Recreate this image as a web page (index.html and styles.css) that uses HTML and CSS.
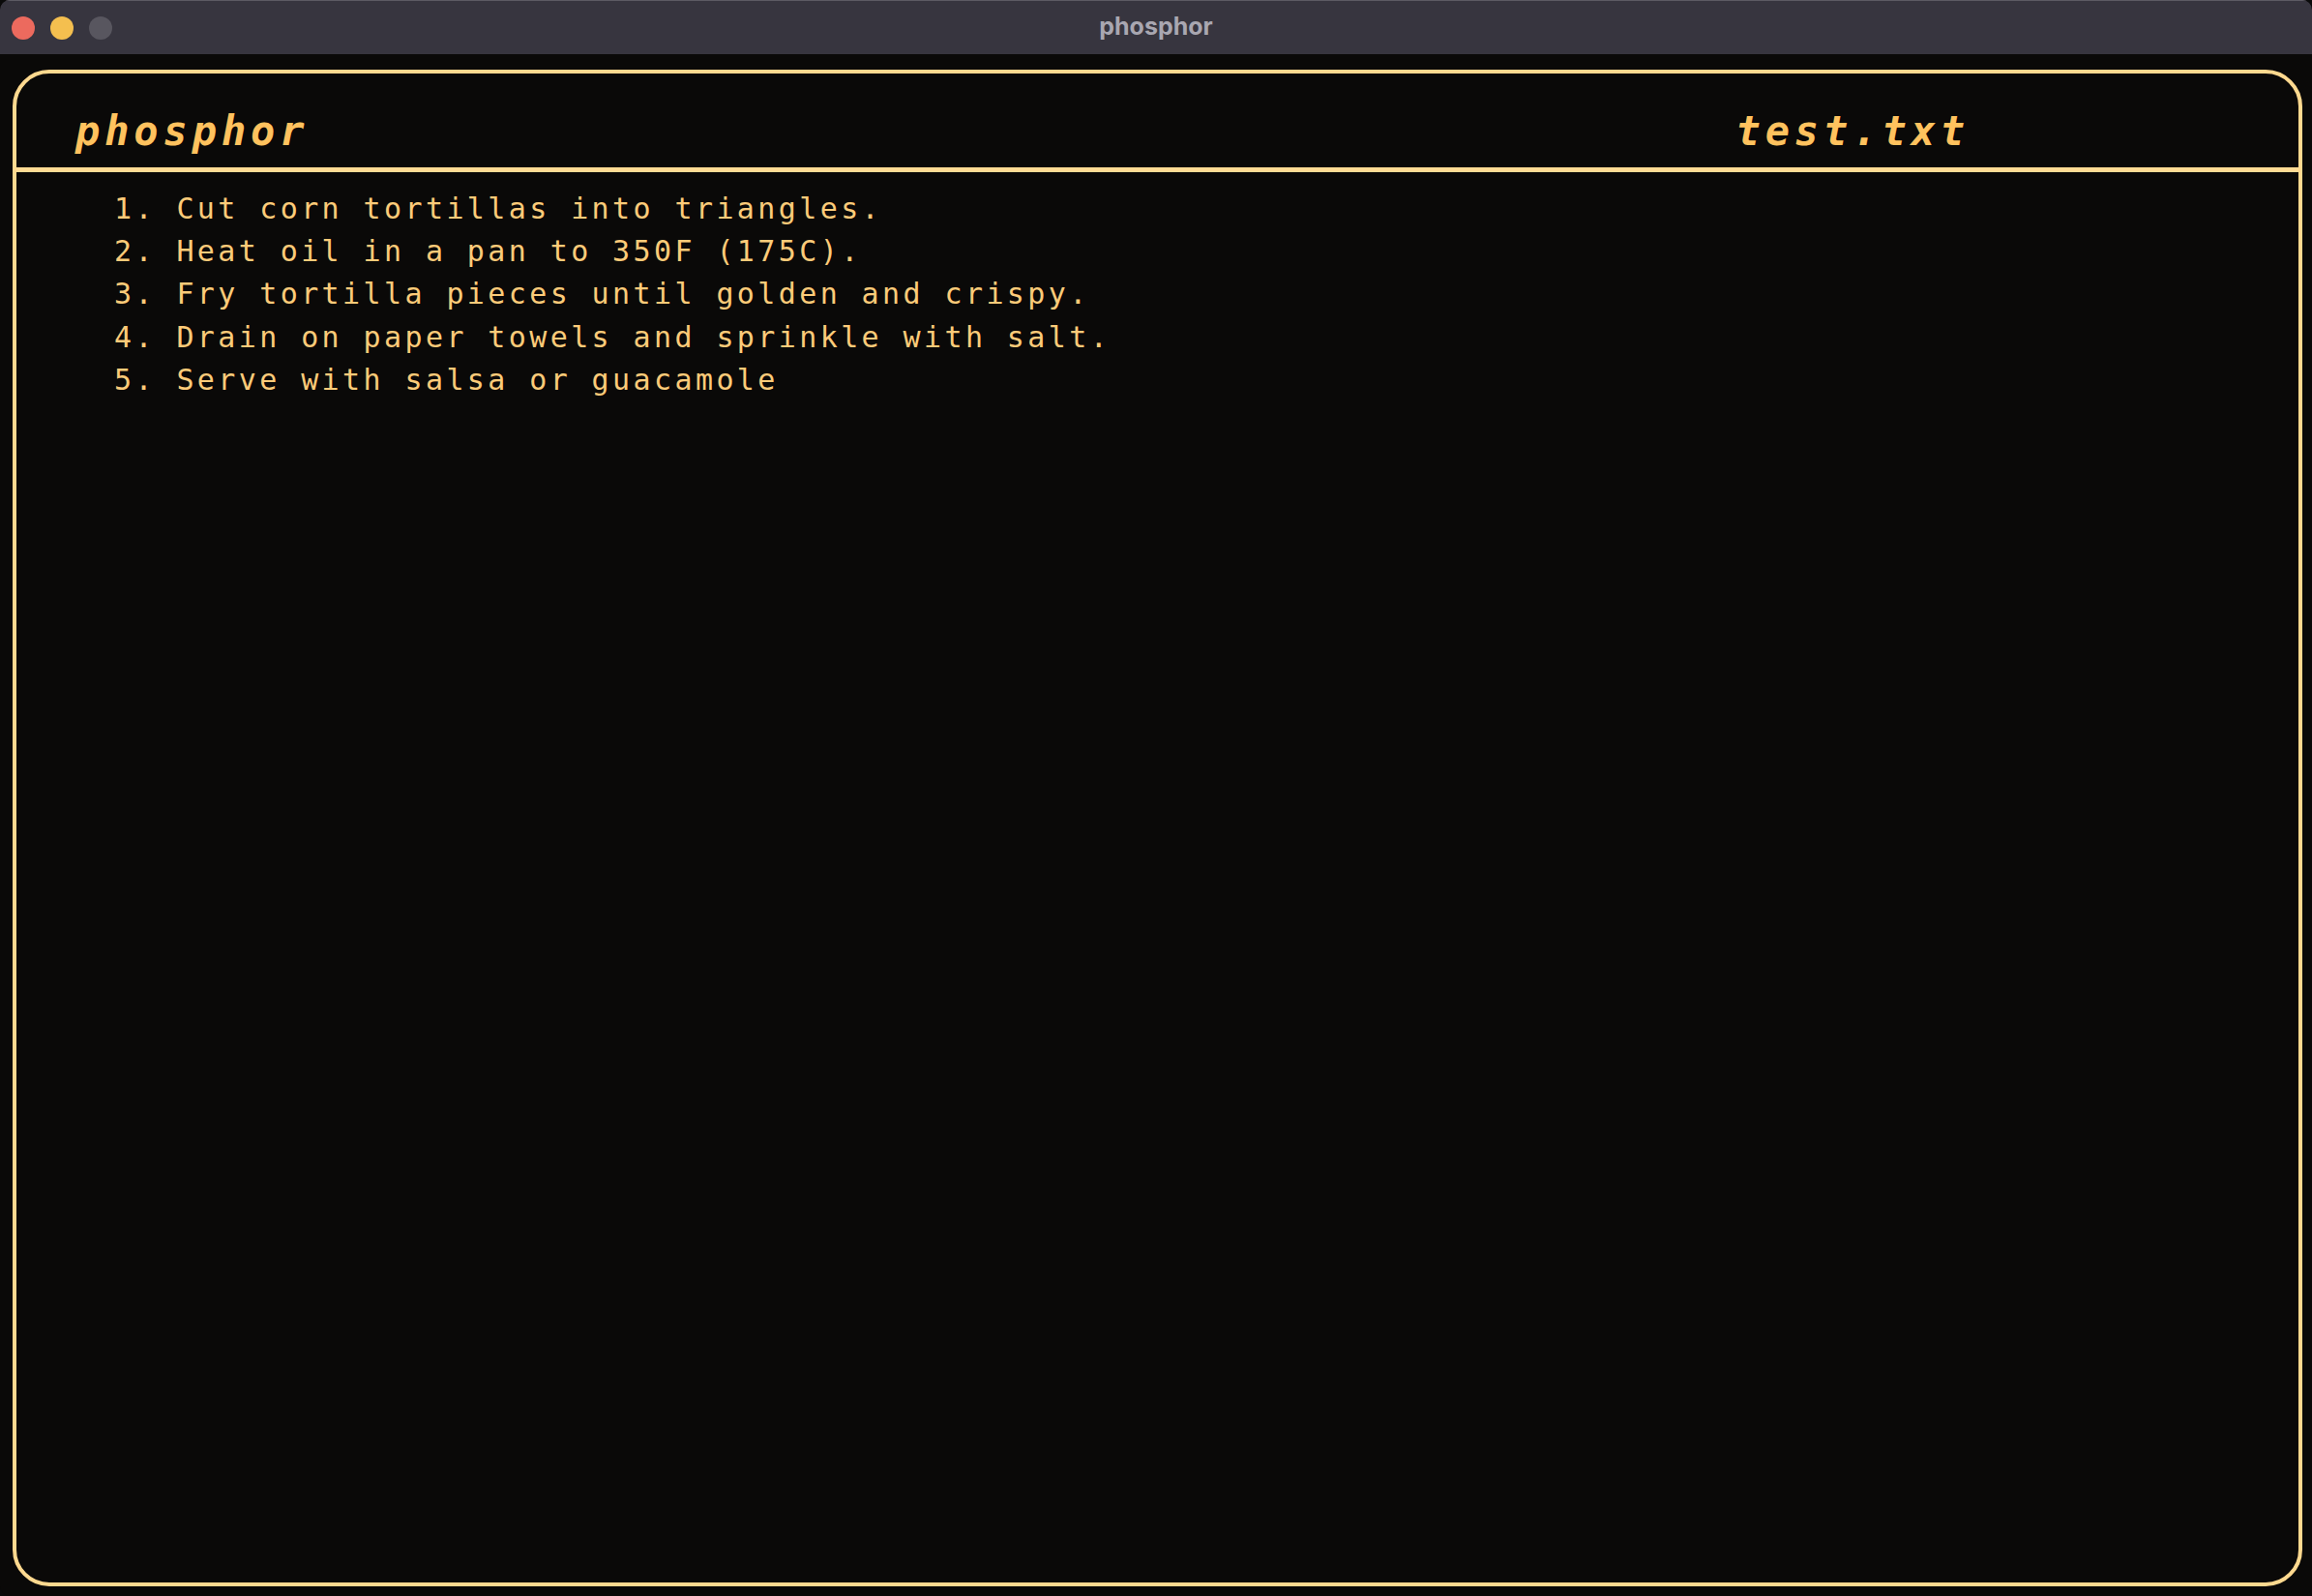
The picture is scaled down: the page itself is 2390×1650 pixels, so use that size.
FILE: index.html
```html
<!DOCTYPE html>
<html lang="en">
<head>
<meta charset="utf-8">
<title>phosphor</title>
<link rel="stylesheet" href="styles.css">
</head>
<body>
<div class="window">
  <div class="titlebar">
    <div class="lights">
      <span class="light light-close"></span>
      <span class="light light-min"></span>
      <span class="light light-max"></span>
    </div>
    <div class="window-title">phosphor</div>
  </div>
  <div class="content">
    <div class="frame">
      <header class="frame-header">
        <span class="brand">phosphor</span>
        <span class="filename">test.txt</span>
      </header>
      <pre class="doc">1. Cut corn tortillas into triangles.
2. Heat oil in a pan to 350F (175C).
3. Fry tortilla pieces until golden and crispy.
4. Drain on paper towels and sprinkle with salt.
5. Serve with salsa or guacamole</pre>
    </div>
  </div>
</div>
</body>
</html>
```
FILE: styles.css
```css
html, body {
  margin: 0;
  padding: 0;
  background: #0a0a0a;
}

.window {
  width: 2390px;
  height: 1650px;
  display: flex;
  flex-direction: column;
  background: #0a0908;
  border-radius: 10px;
  overflow: hidden;
}

.titlebar {
  height: 56px;
  flex: 0 0 56px;
  box-sizing: border-box;
  background: #37353f;
  border-top: 1px solid #5c5a63;
  display: flex;
  align-items: center;
  position: relative;
}

.lights {
  display: flex;
  gap: 16px;
  padding-left: 12px;
}

.light {
  width: 24px;
  height: 24px;
  border-radius: 50%;
  display: block;
}

.light-close { background: #ec6a5e; }
.light-min { background: #f4bf4f; }
.light-max { background: #58565f; }

.window-title {
  position: absolute;
  left: 0;
  right: 0;
  top: 0;
  bottom: 4px;
  display: flex;
  align-items: center;
  justify-content: center;
  font-family: Inter, "Liberation Sans", sans-serif;
  font-weight: 700;
  font-size: 25px;
  color: #a9a7b1;
  pointer-events: none;
}

.content {
  flex: 1;
  display: flex;
  padding: 16px 10px 10px 13px;
  min-height: 0;
}

.frame {
  flex: 1;
  display: flex;
  flex-direction: column;
  border: 4px solid #ffd98f;
  border-radius: 38px;
  background: #0a0908;
}

.frame-header {
  height: 102px;
  box-sizing: border-box;
  border-bottom: 5px solid #ffdb94;
  display: flex;
  align-items: flex-start;
  justify-content: space-between;
  padding: 36px 340px 0 61px;
  font-family: "DejaVu Sans Mono", "Liberation Mono", monospace;
  font-weight: 700;
  font-style: italic;
  font-size: 42px;
  line-height: 48px;
  letter-spacing: 4.9px;
  color: #ffc25e;
}

.doc {
  margin: 0;
  padding: 16px 0 0 101px;
  font-family: "DejaVu Sans Mono", "Liberation Mono", monospace;
  font-size: 30px;
  line-height: 44.2px;
  letter-spacing: 3.4px;
  color: #fccb79;
}
```
